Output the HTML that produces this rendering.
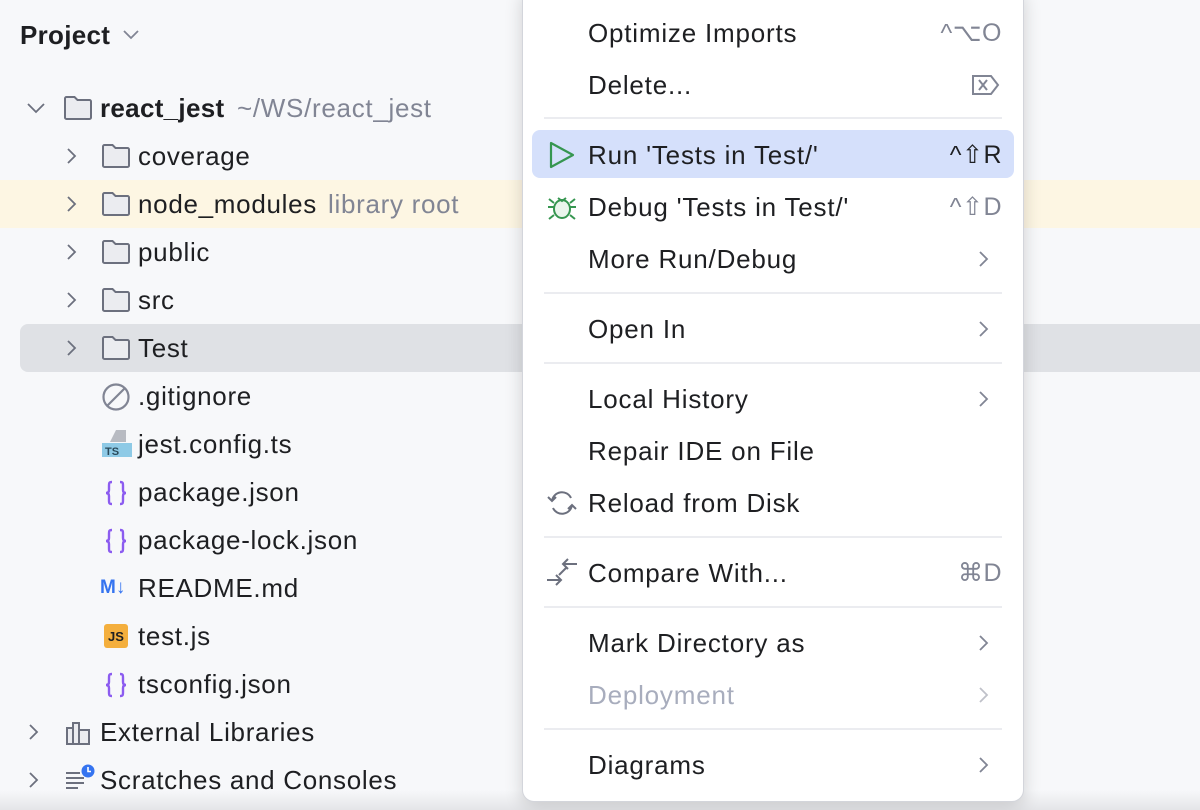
<!DOCTYPE html>
<html><head><meta charset="utf-8"><style>
*{margin:0;padding:0;box-sizing:border-box}
body{width:1200px;height:810px;overflow:hidden;background:#f7f8fa;font-family:"Liberation Sans",sans-serif;color:#1e1f22;position:relative}
.a{position:absolute}
.t{position:absolute;font-size:26px;letter-spacing:0.7px;line-height:50px;white-space:nowrap}
.row{position:absolute;left:0;width:1200px;height:48px}
.m{position:absolute;left:588px;font-size:26px;letter-spacing:0.8px;line-height:54px;white-space:nowrap;color:#1e1f22}
.k{position:absolute;right:198px;font-size:25px;letter-spacing:0.5px;line-height:54px;color:#818594;white-space:nowrap}
.sep{position:absolute;left:544px;width:458px;height:2px;background:#ebecf0}
.ch{position:absolute;left:976px;}
</style></head><body>
<div class="row" style="top:180px;background:#fdf6e3"></div>
<div class="row" style="top:324px;left:20px;width:1180px;background:#dfe1e5;border-radius:8px 0 0 8px"></div>
<div class="a" style="left:0;top:790px;width:1200px;height:20px;background:linear-gradient(#f7f8fa,#e4e5e8)"></div>

<div class="t" style="left:20px;top:10px;font-weight:bold;font-size:26px;letter-spacing:0.3px">Project</div>
<svg class="a" style="left:122px;top:28px" width="18" height="12"><path d="M2 3l7 7 7-7" fill="none" stroke="#818594" stroke-width="1.8"/></svg>

<svg class="a" style="left:26px;top:100px" width="20" height="16"><path d="M2 4l8 8 8-8" fill="none" stroke="#6c707e" stroke-width="1.8"/></svg>
<svg width="0" height="0"><defs><symbol id="fold" viewBox="0 0 30 26"><path d="M2 3.5a1.5 1.5 0 0 1 1.5-1.5h8l3 3h12a1.5 1.5 0 0 1 1.5 1.5v16a1.5 1.5 0 0 1-1.5 1.5h-23A1.5 1.5 0 0 1 2 22.5z" fill="#ebecf0" stroke="#6c707e" stroke-width="2"/></symbol>
<symbol id="chv" viewBox="0 0 16 20"><path d="M4 3l7 7-7 7" fill="none" stroke="#6c707e" stroke-width="1.8"/></symbol>
<symbol id="br" viewBox="0 0 26 28"><path d="M9 3c-3 0-3 1-3 4v4c0 2-1 3-3 3 2 0 3 1 3 3v4c0 3 0 4 3 4M17 3c3 0 3 1 3 4v4c0 2 1 3 3 3-2 0-3 1-3 3v4c0 3 0 4-3 4" fill="none" stroke="#8c5cf0" stroke-width="2.4"/></symbol></defs></svg>
<svg class="a" style="left:63px;top:95px" width="30" height="26"><use href="#fold"/></svg>
<div class="t" style="left:100px;top:83px;font-weight:bold;letter-spacing:0.3px">react_jest</div>
<div class="t" style="left:237px;top:83px;color:#818594">~/WS/react_jest</div>

<svg class="a" style="left:64px;top:146px" width="16" height="20"><use href="#chv"/></svg>
<svg class="a" style="left:101px;top:143px" width="30" height="26"><use href="#fold"/></svg>
<div class="t" style="left:138px;top:131px">coverage</div>
<svg class="a" style="left:64px;top:194px" width="16" height="20"><use href="#chv"/></svg>
<svg class="a" style="left:101px;top:191px" width="30" height="26"><use href="#fold"/></svg>
<div class="t" style="left:138px;top:179px">node_modules</div>
<div class="t" style="left:328px;top:179px;color:#818594">library root</div>
<svg class="a" style="left:64px;top:242px" width="16" height="20"><use href="#chv"/></svg>
<svg class="a" style="left:101px;top:239px" width="30" height="26"><use href="#fold"/></svg>
<div class="t" style="left:138px;top:227px">public</div>
<svg class="a" style="left:64px;top:290px" width="16" height="20"><use href="#chv"/></svg>
<svg class="a" style="left:101px;top:287px" width="30" height="26"><use href="#fold"/></svg>
<div class="t" style="left:138px;top:275px">src</div>
<svg class="a" style="left:64px;top:338px" width="16" height="20"><use href="#chv"/></svg>
<svg class="a" style="left:101px;top:335px" width="30" height="26"><use href="#fold"/></svg>
<div class="t" style="left:138px;top:323px">Test</div>

<svg class="a" style="left:101px;top:382px" width="30" height="30"><circle cx="15" cy="15" r="12.5" fill="none" stroke="#818594" stroke-width="2.2"/><path d="M24 6L6 24" stroke="#818594" stroke-width="2.2"/></svg>
<div class="t" style="left:138px;top:371px">.gitignore</div>
<svg class="a" style="left:102px;top:430px" width="30" height="30"><path d="M14 0h10v12H8z" fill="#b8bbc2"/><rect x="0" y="13" width="30" height="14" fill="#8ecae6"/><text x="3" y="25" font-size="11" font-weight="bold" font-family="Liberation Sans" fill="#2a4a5a">TS</text></svg>
<div class="t" style="left:138px;top:419px">jest.config.ts</div>
<svg class="a" style="left:103px;top:479px" width="26" height="28"><use href="#br"/></svg>
<div class="t" style="left:138px;top:467px">package.json</div>
<svg class="a" style="left:103px;top:527px" width="26" height="28"><use href="#br"/></svg>
<div class="t" style="left:138px;top:515px">package-lock.json</div>
<div class="t" style="left:100px;top:563px;font-size:19px;font-weight:bold;color:#3574f0;letter-spacing:0">M↓</div>
<div class="t" style="left:138px;top:563px">README.md</div>
<div class="a" style="left:104px;top:624px;width:24px;height:24px;background:#f4af3d;border-radius:3px;font-size:13px;font-weight:bold;line-height:26px;text-align:center;color:#1e1f22">JS</div>
<div class="t" style="left:138px;top:611px">test.js</div>
<svg class="a" style="left:103px;top:671px" width="26" height="28"><use href="#br"/></svg>
<div class="t" style="left:138px;top:659px">tsconfig.json</div>

<svg class="a" style="left:26px;top:722px" width="16" height="20"><use href="#chv"/></svg>
<svg class="a" style="left:65px;top:720px" width="28" height="26"><path d="M2 8h6v16H2zM8 3h6v21H8zM14 10h10v14H14z" fill="#ebecf0" stroke="#6c707e" stroke-width="2"/></svg>
<div class="t" style="left:100px;top:707px">External Libraries</div>
<svg class="a" style="left:26px;top:770px" width="16" height="20"><use href="#chv"/></svg>
<svg class="a" style="left:65px;top:763px" width="30" height="30"><path d="M1 10h14M1 15h18M1 20h18M1 25h12" stroke="#6c707e" stroke-width="2"/><circle cx="23" cy="8" r="6.5" fill="#3574f0"/><path d="M23 4v4.5h3" stroke="#fff" stroke-width="1.6" fill="none"/></svg>
<div class="t" style="left:100px;top:755px">Scratches and Consoles</div>

<div class="a" style="left:522px;top:-12px;width:502px;height:814px;background:#fff;border:1px solid #d3d5db;border-radius:12px;box-shadow:0 4px 18px rgba(0,0,0,0.16)"></div>
<div class="a" style="left:532px;top:130px;width:482px;height:48px;background:#d5e0fb;border-radius:8px"></div>

<div class="m" style="top:6px">Optimize Imports</div><div class="k" style="top:6px">^⌥O</div>
<div class="m" style="top:58px">Delete...</div>
<svg class="a" style="left:971px;top:74px" width="29" height="22"><path d="M2 2h18l7 9-7 9H2z M8 6l8 10M16 6l-8 10" fill="none" stroke="#818594" stroke-width="2"/></svg>
<div class="sep" style="top:117px"></div>
<svg class="a" style="left:548px;top:141px" width="28" height="28"><path d="M3 2l22 12L3 26z" fill="none" stroke="#369650" stroke-width="2.2" stroke-linejoin="round"/></svg>
<div class="m" style="top:128px">Run 'Tests in Test/'</div><div class="k" style="top:128px;color:#1e1f22">^⇧R</div>
<svg class="a" style="left:546px;top:192px" width="32" height="30"><ellipse cx="16" cy="17" rx="8" ry="9" fill="#eaf5ec" stroke="#369650" stroke-width="2"/><path d="M12 6l4 3 4-3M2 15h6M24 15h6M3 7l5 4M29 7l-5 4M3 27l5-4M29 27l-5-4" stroke="#369650" stroke-width="2" fill="none"/></svg>
<div class="m" style="top:180px">Debug 'Tests in Test/'</div><div class="k" style="top:180px">^⇧D</div>
<div class="m" style="top:232px">More Run/Debug</div>
<div class="sep" style="top:292px"></div>
<div class="m" style="top:302px">Open In</div>
<div class="sep" style="top:362px"></div>
<div class="m" style="top:372px">Local History</div>
<div class="m" style="top:424px">Repair IDE on File</div>
<svg class="a" style="left:546px;top:489px" width="32" height="28"><path d="M6 12a10 10 0 0 1 19-3M26 16a10 10 0 0 1-19 3M2 8l4 4 4-4M30 20l-4-4-4 4" fill="none" stroke="#6c707e" stroke-width="2"/></svg>
<div class="m" style="top:476px">Reload from Disk</div>
<div class="sep" style="top:536px"></div>
<svg class="a" style="left:545px;top:558px" width="34" height="30"><path d="M2 22h14M11 17l5 5-5 5M18 6h14M23 1l-5 5 5 5M14 17l8-8" fill="none" stroke="#6c707e" stroke-width="2"/></svg>
<div class="m" style="top:546px">Compare With...</div><div class="k" style="top:546px">⌘D</div>
<div class="sep" style="top:606px"></div>
<div class="m" style="top:616px">Mark Directory as</div>
<div class="m" style="top:668px;color:#a8adbd">Deployment</div>
<div class="sep" style="top:728px"></div>
<div class="m" style="top:738px">Diagrams</div>
<svg width="0" height="0"><defs><symbol id="rc" viewBox="0 0 16 20"><path d="M4 3l7 7-7 7" fill="none" stroke="#818594" stroke-width="1.8"/></symbol></defs></svg>
<svg class="ch a" style="top:249px" width="16" height="20"><use href="#rc"/></svg>
<svg class="ch a" style="top:319px" width="16" height="20"><use href="#rc"/></svg>
<svg class="ch a" style="top:389px" width="16" height="20"><use href="#rc"/></svg>
<svg class="ch a" style="top:633px" width="16" height="20"><use href="#rc"/></svg>
<svg class="ch a" style="top:685px;opacity:.5" width="16" height="20"><use href="#rc"/></svg>
<svg class="ch a" style="top:755px" width="16" height="20"><use href="#rc"/></svg>
</body></html>
